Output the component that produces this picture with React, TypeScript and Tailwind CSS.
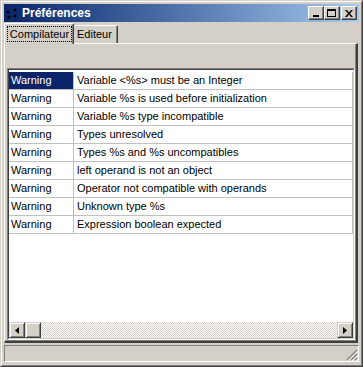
const rows = [
  "Variable <%s> must be an Integer",
  "Variable %s is used before initialization",
  "Variable %s type incompatible",
  "Types unresolved",
  "Types %s and %s uncompatibles",
  "left operand is not an object",
  "Operator not compatible with operands",
  "Unknown type %s",
  "Expression boolean expected",
];

function CaptionButton({ children }: { children: React.ReactNode }) {
  return (
    <div className="w-[16px] h-[14px] bg-[#d4d0c8] border border-t-white border-l-white border-r-[#404040] border-b-[#404040] shadow-[inset_-1px_-1px_#808080] flex items-center justify-center">
      {children}
    </div>
  );
}

function ScrollButton({ children }: { children?: React.ReactNode }) {
  return (
    <div className="w-[16px] h-[16px] shrink-0 bg-[#d4d0c8] border border-t-[#d4d0c8] border-l-[#d4d0c8] border-r-[#404040] border-b-[#404040] shadow-[inset_1px_1px_white,inset_-1px_-1px_#808080] flex items-center justify-center">
      {children}
    </div>
  );
}

export default function App() {
  return (
    <div
      className="w-[363px] h-[367px] border border-t-[#d4d0c8] border-l-[#d4d0c8] border-r-[#404040] border-b-[#404040] text-[11px] text-black"
      style={{ fontFamily: '"Liberation Sans", Arial, sans-serif' }}
    >
      <div className="h-full bg-[#d4d0c8] border border-t-white border-l-white border-r-[#808080] border-b-[#808080] p-[2px] flex flex-col">
        {/* Title bar */}
        <div className="h-[18px] shrink-0 flex items-center bg-gradient-to-r from-[#0a246a] to-[#a6caf0] pr-[2px]">
          <svg width="16" height="14" viewBox="0 0 16 14" className="ml-[1px] shrink-0">
            <circle cx="3" cy="6" r="1.6" fill="#000" />
            <circle cx="10" cy="4" r="1.6" fill="#000" />
            <circle cx="4" cy="11" r="1.6" fill="#000" />
            <circle cx="10" cy="10" r="1.6" fill="#000" />
          </svg>
          <span className="ml-[1px] text-white font-bold text-[12px] leading-none">Préférences</span>
          <div className="ml-auto flex items-center">
            <CaptionButton>
              <div className="w-[6px] h-[2px] bg-black mt-[6px] mr-[1px]" />
            </CaptionButton>
            <CaptionButton>
              <div className="w-[9px] h-[8px] border border-black border-t-2 mr-[1px]" />
            </CaptionButton>
            <div className="ml-[1px]">
              <CaptionButton>
                <svg width="8" height="7" viewBox="0 0 8 7" className="mr-[1px]">
                  <path d="M0 0h2l2 2.5L6 0h2L5 3.5 8 7H6L4 4.5 2 7H0l3-3.5z" fill="#000" />
                </svg>
              </CaptionButton>
            </div>
          </div>
        </div>

        {/* Tabs */}
        <div className="h-[21px] shrink-0 flex items-end">
          <div className="relative z-10 -mb-[1px] h-[21px] w-[70px] bg-[#d4d0c8] border-t border-l border-t-white border-l-white border-r border-r-[#404040] shadow-[inset_-1px_0_#808080] rounded-t-[2px] flex items-start pt-[2px] pl-[2px]">
            <div className="h-[16px] w-[65px] border border-dotted border-black flex items-center justify-center">
              Compilateur
            </div>
          </div>
          <div className="h-[18px] w-[44px] bg-[#d4d0c8] border-t border-t-white border-r border-r-[#404040] shadow-[inset_-1px_0_#808080] rounded-t-[2px] flex items-center pl-[3px]">
            Editeur
          </div>
        </div>

        {/* Tab panel */}
        <div className="h-[300px] shrink-0 mr-[1px] border-t border-l border-t-white border-l-white border-r-2 border-b-2 border-r-[#404040] border-b-[#404040] shadow-[inset_-1px_-1px_#808080] flex flex-col pt-[24px] pl-[2px] pr-[1px] pb-[1px]">
          <div className="flex-1 border border-t-[#808080] border-l-[#808080] border-r-white border-b-white">
            <div className="h-full bg-white border border-t-[#404040] border-l-[#404040] border-r-[#d4d0c8] border-b-[#d4d0c8] flex flex-col">
              <div className="flex-1 pt-[2px]">
                {rows.map((msg, i) => (
                  <div key={i} className="h-[18px] flex border-b border-[#c0c0c0]">
                    <div
                      className={
                        i === 0
                          ? "w-[64px] shrink-0 bg-[#0a246a] text-white pl-[2px] flex items-center"
                          : "w-[64px] shrink-0 pl-[2px] flex items-center"
                      }
                    >
                      Warning
                    </div>
                    <div className="w-[1px] bg-[#c0c0c0]" />
                    <div className="flex-1 pl-[3px] flex items-center border-r border-[#c0c0c0]">{msg}</div>
                  </div>
                ))}
              </div>
              {/* Horizontal scrollbar */}
              <div className="h-[16px] shrink-0 flex">
                <ScrollButton>
                  <svg width="4" height="7" viewBox="0 0 4 7" className="mr-[1px]">
                    <path d="M4 0v7L0 3.5z" fill="#000" />
                  </svg>
                </ScrollButton>
                <ScrollButton />
                <div className="flex-1 bg-[repeating-conic-gradient(#d4d0c8_0_25%,#ffffff_0_50%)] bg-[length:2px_2px]" />
                <ScrollButton>
                  <svg width="4" height="7" viewBox="0 0 4 7">
                    <path d="M0 0v7l4-3.5z" fill="#000" />
                  </svg>
                </ScrollButton>
              </div>
            </div>
          </div>
        </div>

        {/* Status bar */}
        <div className="mt-[2px] h-[17px] shrink-0 border border-t-[#808080] border-l-[#808080] border-r-white border-b-white flex items-end justify-end">
          <svg width="12" height="12" viewBox="0 0 12 12">
            <path d="M11 1L1 11M11 5L5 11M11 9L9 11" stroke="#808080" strokeWidth="1.2" />
            <path d="M12 2L2 12M12 6L6 12M12 10L10 12" stroke="#ffffff" strokeWidth="1" />
          </svg>
        </div>
      </div>
    </div>
  );
}
